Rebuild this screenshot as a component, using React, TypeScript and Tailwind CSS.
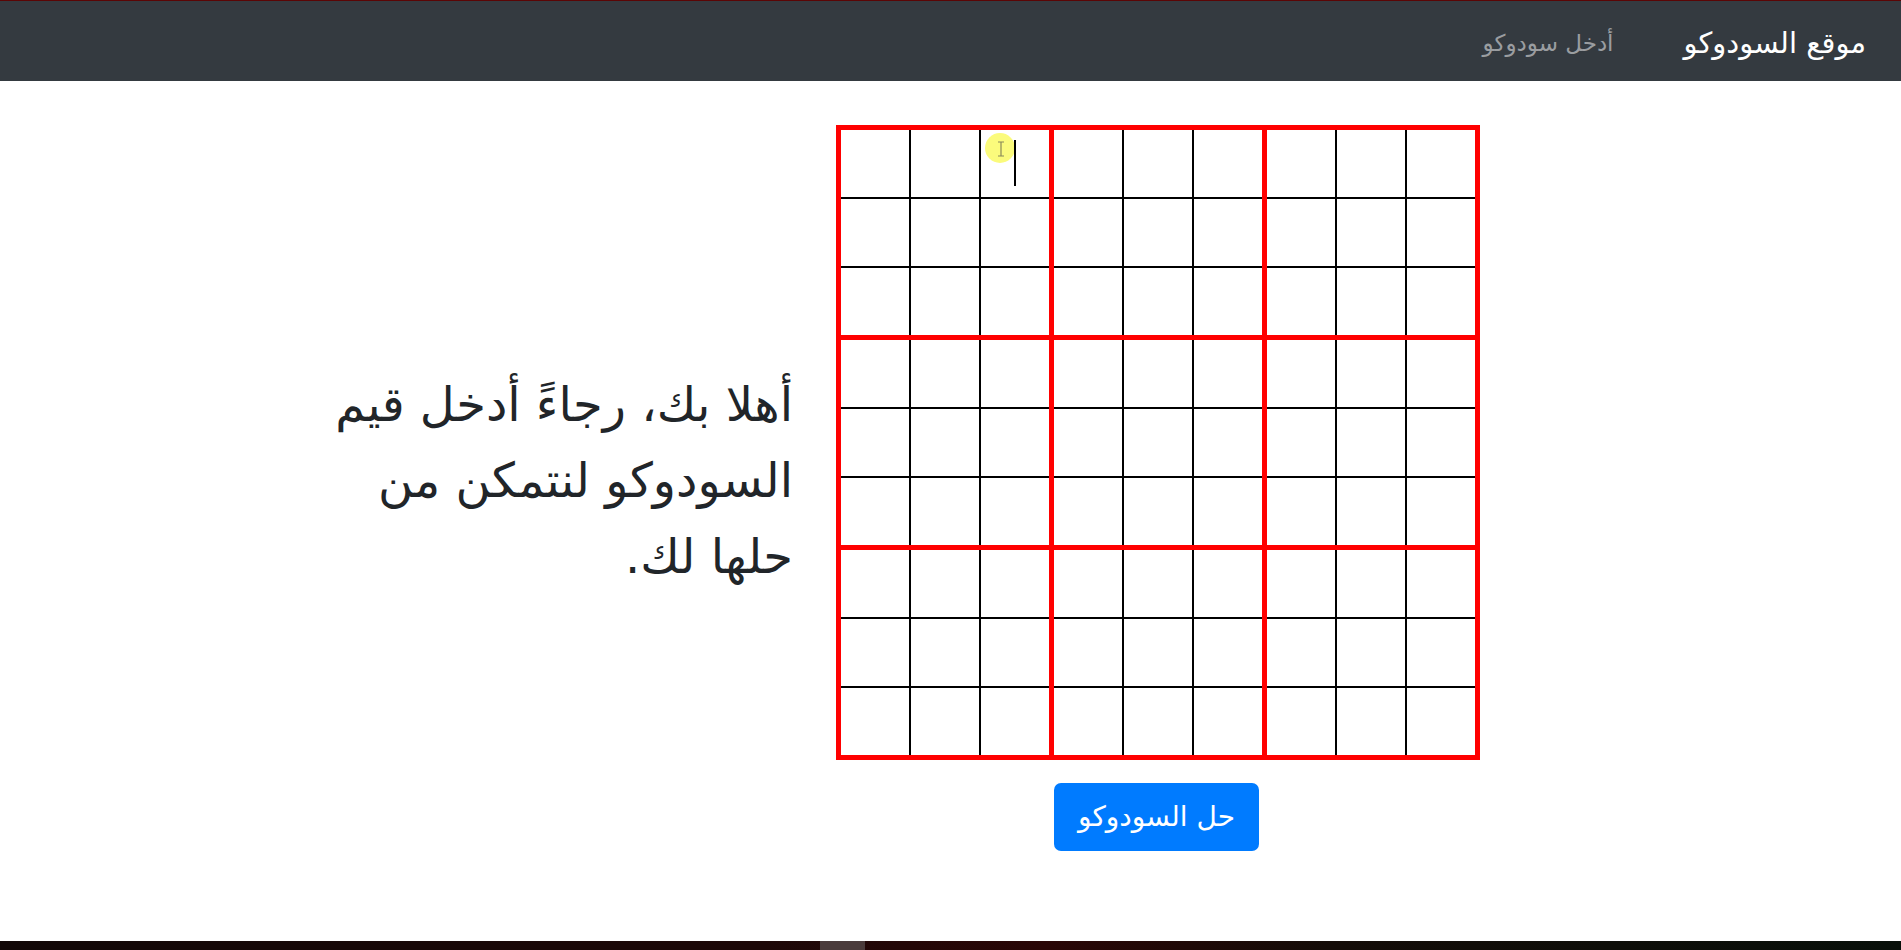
import React from "react";

const font = { fontFamily: '"DejaVu Sans", "Noto Sans", sans-serif' };

function Block({ bi }: { bi: number }) {
  return (
    <div className="grid grid-cols-3 gap-[2px] bg-black">
      {Array.from({ length: 9 }).map((_, ci) => (
        <div key={ci} className="relative w-[68px] h-[67px] bg-white">
          {bi === 0 && ci === 2 && (
            <>
              <div className="absolute left-[4px] top-[3px] w-[30px] h-[30px] rounded-full bg-[#fbfb7c] flex items-center justify-center">
                <svg width="8" height="16" viewBox="0 0 8 16" className="ml-[2px] mt-[2px]">
                  <path d="M1 1h6M4 1v14M1 15h6" stroke="#8a8a5a" strokeWidth="1.2" fill="none" />
                </svg>
              </div>
              <div className="absolute left-[33px] top-[10px] w-[2px] h-[46px] bg-black" />
            </>
          )}
        </div>
      ))}
    </div>
  );
}

export default function App() {
  return (
    <div dir="rtl" className="w-[1901px] h-[950px] flex flex-col bg-white overflow-hidden" style={font}>
      <nav className="h-[81px] shrink-0 bg-[#343a40] border-t border-[#5a0505] flex items-center pr-[35px] pt-[5px]">
        <span className="text-white text-[29px] leading-none ml-[70px]">موقع السودوكو</span>
        <span className="text-[#9a9da0] text-[23px] leading-none">أدخل سودوكو</span>
      </nav>
      <main className="flex-1 flex items-center pr-[421px] gap-[43px] pb-[90px]">
        <div className="flex flex-col items-center pt-[44px]" dir="ltr">
          <div className="grid grid-cols-3 gap-[5px] p-[5px] bg-[#ff0000]">
            {Array.from({ length: 9 }).map((_, bi) => (
              <Block key={bi} bi={bi} />
            ))}
          </div>
          <button
            dir="rtl"
            className="mt-[23px] mr-[3px] w-[205px] h-[68px] rounded-[7px] bg-[#007bff] text-white text-[28px] leading-none"
          >
            حل السودوكو
          </button>
        </div>
        <p className="text-[#212529] text-[48px] leading-[76px] pt-[28px]">
          أهلا بك، رجاءً أدخل قيم
          <br />
          السودوكو لنتمكن من
          <br />
          حلها لك.
        </p>
      </main>
      <div className="h-[9px] shrink-0 relative bg-[linear-gradient(90deg,#120808,#1d0808_40%,#2a0606_55%,#140c08_70%,#08100a)]">
        <div className="absolute left-[820px] top-0 w-[45px] h-[9px] bg-[#4a3b3b]" />
      </div>
    </div>
  );
}
